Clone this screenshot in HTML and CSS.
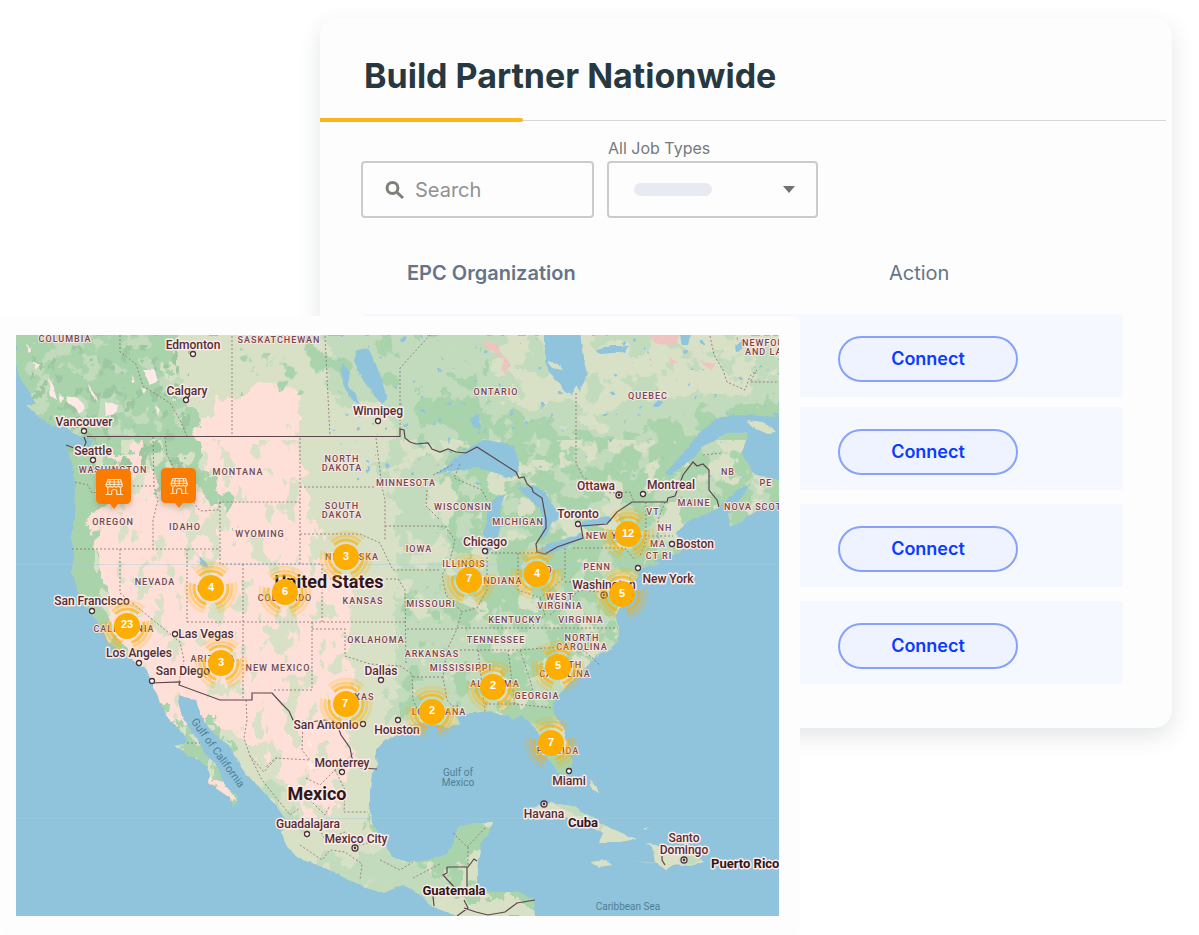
FILE: index.html
```html
<!DOCTYPE html>
<html lang="en">
<head>
<meta charset="utf-8">
<meta name="viewport" content="width=device-width, initial-scale=1">
<title>Build Partner Nationwide</title>
<link rel="stylesheet" href="styles.css">
</head>
<body>
<main class="stage">
  <section class="panel">
    <header class="panel-head">
      <h1 class="panel-title">Build Partner Nationwide</h1>
      <div class="panel-rule"></div>
    </header>
    <form class="filters">
      <div class="search">
        <label class="search-label" for="q" aria-label="Search">
          <svg class="search-icon" viewBox="0 0 20 20" aria-hidden="true"><circle cx="7.5" cy="8" r="5.4"/><path d="M11.600 12L18 18"/></svg>
        </label>
        <input class="search-input" id="q" type="search" placeholder="Search">
      </div>
      <div class="jobs">
        <label class="jobs-label" for="jobs">All Job Types</label>
        <div class="jobs-box">
          <select class="jobs-select" id="jobs"><option></option></select>
          <span class="jobs-pill"></span>
          <svg class="jobs-caret" viewBox="0 0 12 7" aria-hidden="true"><path d="M0 0H12L6 7Z"/></svg>
        </div>
      </div>
    </form>
    <table class="partners">
      <thead><tr class="row-head"><th class="th-org">EPC Organization</th><th class="th-act">Action</th></tr></thead>
      <tbody>
        <tr class="row"><td></td><td><button class="connect" type="button">Connect</button></td></tr>
        <tr class="row"><td></td><td><button class="connect" type="button">Connect</button></td></tr>
        <tr class="row"><td></td><td><button class="connect" type="button">Connect</button></td></tr>
        <tr class="row"><td></td><td><button class="connect" type="button">Connect</button></td></tr>
      </tbody>
    </table>
  </section>

  <section class="map-card">
    <svg class="map" viewBox="16 335 763 581" role="img" aria-label="Partner map of North America">
      <defs>
        <filter id="rough" x="-5%" y="-5%" width="110%" height="110%"><feTurbulence type="fractalNoise" baseFrequency=".1" numOctaves="2" seed="4"/><feDisplacementMap in="SourceGraphic" scale="4" xChannelSelector="R" yChannelSelector="G"/></filter>
        <filter id="ragged" x="-5%" y="-5%" width="110%" height="110%"><feTurbulence type="fractalNoise" baseFrequency=".05" numOctaves="4" seed="9"/><feDisplacementMap in="SourceGraphic" scale="34" xChannelSelector="R" yChannelSelector="G"/></filter>
        <filter id="m-beige" x="0" y="0" width="1" height="1" color-interpolation-filters="sRGB"><feTurbulence type="fractalNoise" baseFrequency=".035" numOctaves="4" seed="3"/><feColorMatrix values="0 0 0 0 .847  0 0 0 0 .878  0 0 0 0 .776  26 0 0 0 -15"/><feComposite in2="SourceGraphic" operator="in"/></filter>
        <filter id="m-sparse" x="0" y="0" width="1" height="1" color-interpolation-filters="sRGB"><feTurbulence type="fractalNoise" baseFrequency=".06 .04" numOctaves="4" seed="17"/><feColorMatrix values="0 0 0 0 .847  0 0 0 0 .878  0 0 0 0 .776  26 0 0 0 -15.4"/><feComposite in2="SourceGraphic" operator="in"/></filter>
        <filter id="m-light" x="0" y="0" width="1" height="1" color-interpolation-filters="sRGB"><feTurbulence type="fractalNoise" baseFrequency=".04" numOctaves="4" seed="12"/><feColorMatrix values="0 0 0 0 .761  0 0 0 0 .859  0 0 0 0 .741  26 0 0 0 -14.3"/><feComposite in2="SourceGraphic" operator="in"/></filter>
        <filter id="m-green" x="0" y="0" width="1" height="1" color-interpolation-filters="sRGB"><feTurbulence type="fractalNoise" baseFrequency=".04" numOctaves="4" seed="21"/><feColorMatrix values="0 0 0 0 .663  0 0 0 0 .827  0 0 0 0 .671  26 0 0 0 -15.4"/><feComposite in2="SourceGraphic" operator="in"/></filter>
        <filter id="m-dark" x="0" y="0" width="1" height="1" color-interpolation-filters="sRGB"><feTurbulence type="fractalNoise" baseFrequency=".1 .07" numOctaves="3" seed="5"/><feColorMatrix values="0 0 0 0 .61  0 0 0 0 .78  0 0 0 0 .63  20 0 0 0 -12"/><feComposite in2="SourceGraphic" operator="in"/></filter>
        <filter id="m-pink" x="0" y="0" width="1" height="1" color-interpolation-filters="sRGB"><feTurbulence type="fractalNoise" baseFrequency=".05" numOctaves="3" seed="33"/><feColorMatrix values="0 0 0 0 .996  0 0 0 0 .878  0 0 0 0 .847  26 0 0 0 -13.6"/><feComposite in2="SourceGraphic" operator="in"/></filter>
        <filter id="m-lake" x="0" y="0" width="1" height="1" color-interpolation-filters="sRGB"><feTurbulence type="fractalNoise" baseFrequency=".11" numOctaves="2" seed="8"/><feColorMatrix values="0 0 0 0 .565  0 0 0 0 .765  0 0 0 0 .863  30 0 0 0 -22"/><feComposite in2="SourceGraphic" operator="in"/></filter>
        <filter id="pin-shadow" x="-30%" y="-20%" width="160%" height="160%"><feDropShadow dx="0" dy="3" stdDeviation="3" flood-color="#7a6a50" flood-opacity=".35"/></filter>
        <clipPath id="land"><path d="M16 335H779V417L745 415 720 417 704 429 690 445 672 466 664 474 672 474 687 463 703 447 727 433 748 433 742 453 753 473 779 480V500L760 507 742 522 730 525 728 514 741 498 750 484 737 490 720 507 700 517 690 520 677 532 678 543 684 547 680 553 653 560 660 563 640 569 637 575 633 587 626 598 620 607 615 617 619 627 618 640 610 650 600 653 583 670 563 690 554 703 555 713 562 727 568 743 572 763 568 775 557 773 549 760 540 750 538 733 530 723 523 715 513 720 507 715 487 712 467 713 457 717 460 725 447 728 433 725 420 723 403 730 387 740 375 750 377 763 372 773 370 790 370 813 375 827 383 843 393 857 410 863 427 860 443 855 452 847 457 828 473 823 492 823 488 835 482 843 478 860 477 877 478 890 493 892 520 892 533 900 535 916H457L433 907 417 892 403 885 383 893 363 887 343 877 323 867 303 860 287 847 282 833 288 823 277 807 260 788 245 773 240 763 230 747 217 737 205 723 198 707 196 699 184 697 179 694 178 702 182 716 192 732 200 743 206 755 217 765 222 778 226 788 230 790 235 793 238 800 233 807 230 798 223 793 208 783 209 775 207 765 195 758 187 755 176 745 186 743 187 737 177 727 167 717 160 702 151 682 147 670 134 660 124 655 108 642 100 625 90 613 79 598 77 590 71 573 75 553 71 537 74 520 75 483 72 467 67 445 78 449 85 443 84 437 66 428 48 425 26 405 36 404 28 390 20 378 16 368Z"/></clipPath>
        <g id="cluster">
          <circle class="ring ring-1" r="17" pathLength="360"/>
          <circle class="ring ring-2" r="21" pathLength="360"/>
          <circle class="ring ring-3" r="25" pathLength="360"/>
          <circle class="core" r="13"/>
        </g>
        <g id="store">
          <path class="pin-body" filter="url(#pin-shadow)" d="M5 0H30Q35 0 35 5V30Q35 35 30 35H22L18 40 14 35H5Q0 35 0 30V5Q0 0 5 0Z"/>
          <g class="pin-icon"><path d="M12 10.500H24.500L26.200 15.500H10.200ZM14.300 10.500L13.500 15.500M18.200 10.500V15.500M22.100 10.500L23 15.500M11.300 13H25.100"/><path d="M10.200 15.500V17Q12.200 19.200 14.200 17Q16.200 19.200 18.200 17Q20.200 19.200 22.200 17Q24.200 19.200 26.200 17V15.500M11.800 18.500V25.500M24.600 18.500V25.500M9.800 25.500H15.500M20.900 25.500H26.600M15.600 25.500V22.500Q15.600 20.500 18.200 20.500Q20.800 20.500 20.800 22.500V25.500"/></g>
        </g>
        <g id="town"><circle class="town" r="2.500"/></g>
        <g id="capital"><circle class="town" r="3"/><circle class="dot" r="1.400"/></g>
      </defs>

      <rect class="water" x="16" y="335" width="763" height="581"/>
      <g filter="url(#rough)">
        <g clip-path="url(#land)">
          <rect class="green" x="10" y="330" width="775" height="591"/>
          <g filter="url(#ragged)">
            <path class="light" d="M300 330H520L470 372 420 400 415 440 440 480 450 560 480 600 500 650 460 740H370V560L300 440Z"/>
            <path class="light" d="M490 330H800V402L740 408 690 400 640 430 600 436 570 438 540 418 490 408Z"/>
            <path class="beige" d="M490 320H800V376L735 392 700 396 660 398 620 418 592 430 560 418 535 402 505 405Z"/>
            <path class="beige" d="M180 320H318L335 400 385 405 390 445 380 470 400 530 395 600 395 690 385 745 365 800 385 850 420 880 470 900 540 900V930H430L300 870 250 780 200 700 230 450 165 380Z"/>
            <path class="pink" d="M190 445L198 422 230 412 270 425 298 440 300 475 316 520 320 560 352 585 350 620 335 660 358 690 338 715 355 745 336 790 335 828 310 822 292 790 262 765 215 722 170 720 190 800 235 802 180 745 150 690 118 645 98 560 92 522 112 455 145 440 158 500Z"/>
            <path class="pink" d="M235 400L262 385 300 395 300 430 210 438Z"/>
            <path class="green" d="M150 430H190L205 465 232 505 232 520 216 505 180 475Z"/>
            <path class="beige" d="M204 500L220 510 218 548 212 570 198 570 206 540ZM276 610L292 625 284 650 272 645ZM225 730L250 740 285 790 270 800 235 760ZM98 585L112 610 125 640 115 635 98 610Z"/>
            <path class="light" d="M425 560H470L480 640 440 660ZM560 640L620 620 600 660 570 700 540 700ZM300 860L400 855 450 880 430 910ZM255 780L275 785 300 830 285 825Z"/>
          </g>
          <g>
            <rect class="fx" filter="url(#m-light)" x="16" y="335" width="170" height="100"/>
            <rect class="fx" filter="url(#m-light)" x="395" y="335" width="384" height="400"/>
            <rect class="fx" filter="url(#m-beige)" x="380" y="440" width="399" height="480"/>
            <rect class="fx" filter="url(#m-green)" x="240" y="335" width="180" height="60"/>
            <rect class="fx" filter="url(#m-sparse)" x="95" y="440" width="260" height="400"/>
            <rect class="fx" filter="url(#m-green)" x="400" y="560" width="220" height="160"/>
            <rect class="fx" filter="url(#m-dark)" x="30" y="345" width="160" height="125"/>
            <path class="fx" filter="url(#m-pink)" d="M215 395H298V445H215Z"/>
            <rect class="fx" filter="url(#m-lake)" x="330" y="335" width="449" height="150"/>
          </g>
          <path class="green" d="M73 470L88 480 86 540 92 590 110 620 104 632 90 612 76 592 70 560Z"/>
          <path class="snow" d="M48 378L53 385 57 400 51 396ZM58 393L64 400 60 403ZM66 395L78 398 85 408 80 413 68 402ZM143 370L155 370 158 382 150 385ZM131 375L135 382 132 383ZM26 345L32 350 28 352ZM33 362L39 364 36 370ZM156 405L160 410 157 415ZM88 384L96 395 98 402 90 392ZM105 402L118 405 116 414 106 416ZM140 388L146 389 144 394ZM308 738L314 748 308 745ZM308 760L318 768 310 770Z"/>
          <path class="rose" d="M650 336L680 336 673 345 655 343ZM670 358L678 362 668 366ZM700 360L715 364 712 370ZM483 342L498 345 500 352 510 362 505 376 501 370 503 358 490 350Z"/>
        </g>
        <path class="water" d="M545 330H580L583 358 587 373 580 391 576 386 571 394 565 391 556 380 549 373 545 360ZM357 350L368 348 376 364 383 384 387 400 382 405 372 392 360 374 354 360ZM343 364L350 372 348 386 355 396 360 404 352 402 344 384 340 372ZM434 476L453 460 478 442 492 440 507 443 517 455 519 474 507 477 492 472 478 468 460 470 444 472ZM496 497L506 494 500 510 501 525 496 545 488 553 482 542 486 524 488 506ZM518 488L535 486 546 493 552 505 562 516 552 522 547 535 541 540 543 524 540 508 528 498ZM536 552L547 544 562 541 580 533 584 537 562 549 543 556ZM578 525L592 519 609 516 612 521 598 526 582 527ZM199 556L207 562 208 568 202 566ZM80 437L92 440 89 450 85 444ZM470 418L479 415 480 430 473 426ZM596 350L612 346 628 346 625 352 600 354ZM735 345L743 340 742 350 736 351ZM680 336L690 336 688 344 682 344Z"/>
        <path class="beige" d="M548 361L558 363 563 370 552 368ZM747 420L762 422 777 433 768 434 752 427Z"/>
        <path class="beige" d="M522 816L532 808 550 803 572 806 590 816 604 825 622 833 637 839 620 842 599 842 603 833 588 824 566 816 548 813 530 812ZM590 862L606 860 612 866 600 868ZM633 861L655 863 652 847 645 844 668 846 690 852 704 862 690 866 674 864 666 870 658 864ZM590 779L597 787 599 795 592 790ZM585 760L596 760ZM643 829L650 827 646 831Z"/>
        <path class="light" d="M550 803L572 806 604 825 600 832 580 816ZM690 852L702 860 690 865 678 860ZM750 478L762 482 774 486 768 489 753 484Z"/>
      </g>
      <path class="seam" d="M16 564.500H779M16 818.500H779"/>

      <path class="state" d="M120 335V352L136 364 143 386 170 403 180 420 187 436M232 336V436M325 336L330 436M400 429V368L430 335M576 393V463L583 477 610 493 630 492 634 502M710 336L714 355 723 370 727 382 745 390 750 376 757 370 750 382H779M703 455L722 453M75 482L88 485 92 493 127 486H154M153 437L154 487 158 500 153 520V549M165 437L167 455 180 480 192 500 200 511 218 510 220 502H300M72 549H220M220 502V564H322V622M120 549V593L180 642 184 660 179 682M187 549V622M187 622H406M243 564V700M300 438V564M300 487H376M376 438L382 487 385 500V540M300 534H360L380 543 388 560 393 570H440M322 579H398L405 590 406 665M385 526H445L455 540 450 560 442 575 446 595 462 612 457 628M312 622V690H272M312 629H345V656L370 664 400 666 412 674 413 700 420 715M407 629H457L447 650 443 677 447 700 452 706H460M413 677H443M457 628H618M460 650H520L545 648 580 647 600 665M478 650L485 712M508 650L515 705M485 704H515L553 708M520 650L530 680 535 700M433 475L454 464M460 464L454 478 482 490 487 500M487 553H537M487 553V590L477 608 462 612M518 553V590L540 598 550 590 565 577V548M573 548H625L635 560M565 582H622L628 592M540 598L545 615 530 628M550 615L580 590 600 592M646 502V540L640 556M665 502L658 520V545M640 536H673M427 490L426 506 440 520M187 743H200M246 700L247 720 244 738 250 756 264 772 270 765 278 757M250 756L262 780 278 800 290 815 300 808M303 720L302 750 310 760 275 758 265 768M306 778L320 785 335 770 355 752M335 770L345 790 344 812 368 812M300 845L322 860 330 850 345 852 362 864 360 880M316 822L325 840 345 832 360 845 372 842M380 860L400 870 413 862M310 800L325 815 330 805M453 833L467 847 485 828M468 847V867M413 878L440 864"/>
      <path class="nation" d="M66 445L74 448M84 437L86 442 83 450M87 436.500H400V429L404 430 405 438 410 442 416 444 428 443 432 449 440 452 448 449 456 452 466 453 477 447 516 472 519 478 524 477 527 484 532 488 533 492 542 498 546 520 546 528 536 544 537 552 545 554 557 547 583 538 581 526 607 524 617 512 632 502H667L668 498 675 496 683 475 693 462 697 466 703 464 709 470V490L717 500 719 507M151 683L180 682 179 685 220 700H252V693H272L282 704 289 711 293 720 303 723 325 720 338 727 341 735 350 748 352 758 360 768 377 769M447 867H468L474 859 477 861M447 867V873L443 875 455 888M467 867V888M464 900L468 908 457 916M433 896L434 906M464 908L476 912 488 915 505 912 517 903 535 900M662 856V860L665 865"/>

      <g class="city">
        <text x="193" y="349">Edmonton</text><text x="187" y="395">Calgary</text><text x="378" y="415">Winnipeg</text><text x="84" y="426">Vancouver</text><text x="93" y="455">Seattle</text><text x="596" y="490">Ottawa</text><text x="671" y="489">Montreal</text><text x="578" y="518">Toronto</text><text x="695" y="548">Boston</text><text x="668" y="583">New York</text><text x="604" y="589">Washington</text><text x="485" y="546">Chicago</text><text x="92" y="605">San Francisco</text><text x="206" y="638">Las Vegas</text><text x="139" y="657">Los Angeles</text><text x="183" y="675">San Diego</text><text x="381" y="675">Dallas</text><text x="326" y="729">San Antonio</text><text x="397" y="734">Houston</text><text x="342" y="767">Monterrey</text><text x="308" y="828">Guadalajara</text><text x="356" y="843">Mexico City</text><text x="569" y="785">Miami</text><text x="544" y="818">Havana</text><text x="684" y="842">Santo</text><text x="684" y="854">Domingo</text>
      </g>
      <g class="region">
        <text x="65" y="342">COLUMBIA</text><text x="279" y="343">SASKATCHEWAN</text><text x="742" y="346" class="from">NEWFOUNDLAND</text><text x="745" y="355" class="from">AND LABRADOR</text><text x="496" y="395">ONTARIO</text><text x="648" y="399">QUEBEC</text><text x="238" y="475">MONTANA</text><text x="342" y="462">NORTH</text><text x="342" y="471">DAKOTA</text><text x="406" y="486">MINNESOTA</text><text x="463" y="510">WISCONSIN</text><text x="342" y="509">SOUTH</text><text x="342" y="518">DAKOTA</text><text x="113" y="473">WASHINGTON</text><text x="113" y="525">OREGON</text><text x="185" y="530">IDAHO</text><text x="260" y="537">WYOMING</text><text x="518" y="525">MICHIGAN</text><text x="728" y="475">NB</text><text x="766" y="486">PE</text><text x="694" y="506">MAINE</text><text x="724" y="510" class="from">NOVA SCOTIA</text><text x="653" y="515">VT</text><text x="665" y="531">NH</text><text x="612" y="539">NEW YORK</text><text x="658" y="547">MA</text><text x="659" y="559">CT RI</text><text x="155" y="585">NEVADA</text><text x="211" y="592">UTAH</text><text x="285" y="601">COLORADO</text><text x="352" y="560">NEBRASKA</text><text x="419" y="552">IOWA</text><text x="464" y="567">ILLINOIS</text><text x="501" y="584">INDIANA</text><text x="540" y="573">OHIO</text><text x="597" y="570">PENN</text><text x="560" y="600">WEST</text><text x="560" y="609">VIRGINIA</text><text x="581" y="623">VIRGINIA</text><text x="515" y="623">KENTUCKY</text><text x="363" y="604">KANSAS</text><text x="431" y="607">MISSOURI</text><text x="376" y="643">OKLAHOMA</text><text x="496" y="643">TENNESSEE</text><text x="432" y="657">ARKANSAS</text><text x="461" y="671">MISSISSIPPI</text><text x="124" y="632">CALIFORNIA</text><text x="213" y="662">ARIZONA</text><text x="278" y="671">NEW MEXICO</text><text x="358" y="700">TEXAS</text><text x="439" y="715">LOUISIANA</text><text x="495" y="687">ALABAMA</text><text x="537" y="699">GEORGIA</text><text x="582" y="641">NORTH</text><text x="582" y="650">CAROLINA</text><text x="565" y="668">SOUTH</text><text x="565" y="677">CAROLINA</text><text x="558" y="754">FLORIDA</text>
      </g>
      <g class="country"><text class="big" x="329" y="588">United States</text><text class="big" x="317" y="800">Mexico</text><text x="454" y="895">Guatemala</text><text x="583" y="827">Cuba</text><text x="711" y="868" class="from">Puerto Rico</text></g>
      <g class="sea"><text x="458" y="776">Gulf of</text><text x="458" y="786">Mexico</text><text x="628" y="910">Caribbean Sea</text><text class="gulf" transform="translate(215 755) rotate(54)">Gulf of California</text></g>

      <g>
        <use href="#town" x="193" y="354"/><use href="#town" x="186" y="400"/><use href="#town" x="378" y="421"/><use href="#town" x="84" y="431"/><use href="#town" x="93" y="460"/><use href="#capital" x="619" y="495"/><use href="#town" x="643" y="494"/><use href="#town" x="578" y="524"/><use href="#town" x="672" y="544"/><use href="#town" x="638" y="568"/><use href="#capital" x="604" y="595"/><use href="#town" x="485" y="551"/><use href="#town" x="92" y="611"/><use href="#town" x="175" y="634"/><use href="#town" x="139" y="663"/><use href="#town" x="152" y="681"/><use href="#town" x="381" y="680"/><use href="#town" x="363" y="724"/><use href="#town" x="398" y="720"/><use href="#town" x="342" y="772"/><use href="#town" x="307" y="834"/><use href="#capital" x="355" y="848"/><use href="#town" x="569" y="771"/><use href="#capital" x="544" y="804"/><use href="#capital" x="684" y="860"/>
      </g>
      <use href="#store" x="96" y="469"/><use href="#store" x="161" y="468"/>
      <g class="count">
        <use href="#cluster" x="346" y="557"/><text x="346" y="560">3</text>
        <use href="#cluster" x="285" y="592"/><text x="285" y="595">6</text>
        <use href="#cluster" x="211" y="588"/><text x="211" y="591">4</text>
        <use href="#cluster" x="127" y="626"/><text x="127" y="628">23</text>
        <use href="#cluster" x="221" y="663"/><text x="221" y="666">3</text>
        <use href="#cluster" x="469" y="580"/><text x="469" y="582">7</text>
        <use href="#cluster" x="537" y="574"/><text x="537" y="577">4</text>
        <use href="#cluster" x="628" y="534"/><text x="628" y="537">12</text>
        <use href="#cluster" x="622" y="594"/><text x="622" y="597">5</text>
        <use href="#cluster" x="558" y="667"/><text x="558" y="669">5</text>
        <use href="#cluster" x="493" y="687"/><text x="493" y="689">2</text>
        <use href="#cluster" x="432" y="712"/><text x="432" y="714">2</text>
        <use href="#cluster" x="346" y="704"/><text x="345" y="707">7</text>
        <use href="#cluster" x="551" y="743"/><text x="551" y="746">7</text>
      </g>
    </svg>
  </section>
</main>
</body>
</html>
```
FILE: styles.css
```css
* { box-sizing: border-box; }
body { margin: 0; background: #fff; font-family: Inter, "Liberation Sans", sans-serif; }

.stage {
  display: grid;
  grid-template-columns: 320fr 480fr 372fr 27fr;
  align-items: start;
  padding-top: 18px;
}

.panel {
  grid-column: 2 / 4;
  grid-row: 1;
  padding-bottom: 44px;
  background: #fdfdfe;
  border-radius: 18px;
  box-shadow: 0 8px 22px rgba(40, 55, 60, .13);
}
.panel-title {
  margin: 0;
  padding: 36px 44px 20px;
  font-size: 34px;
  line-height: 44px;
  font-weight: 700;
  color: #283840;
}
.panel-rule {
  height: 4px;
  margin-right: 6px;
  background: linear-gradient(#d6d7d8, #d6d7d8) 0 2px / 100% 1px no-repeat;
}
.panel-rule::before {
  content: "";
  display: block;
  width: 24%;
  height: 4px;
  border-radius: 0 2px 2px 0;
  background: #fdb41a;
}

.filters {
  display: flex;
  align-items: flex-end;
  gap: 13px;
  padding: 16px 41px 0;
}
.search {
  display: flex;
  align-items: center;
  gap: 10px;
  width: 233px;
  height: 57px;
  padding: 0 22px;
  border: 2px solid #cbcbcb;
  border-radius: 4px;
}
.search-label { display: flex; }
.search-icon { width: 20px; height: 20px; fill: none; stroke: #7e7f79; stroke-width: 3; }
.search-input {
  flex: 1;
  min-width: 0;
  padding: 0;
  border: 0;
  outline: 0;
  background: none;
  font: 400 20px/24px Inter, sans-serif;
}
.search-input::placeholder { color: #8f9193; opacity: 1; }
.jobs { display: flex; flex-direction: column; width: 211px; }
.jobs-label { padding: 0 1px; margin-bottom: 3px; font-size: 16px; line-height: 20px; color: #77797b; }
.jobs-box {
  display: grid;
  grid-template-columns: 27px 78px 1fr 12px 23px;
  align-items: center;
}
.jobs-select {
  grid-area: 1 / 1 / 2 / 6;
  width: 100%;
  height: 57px;
  border: 2px solid #cbcbcb;
  border-radius: 4px;
  background: none;
  appearance: none;
}
.jobs-pill { grid-area: 1 / 2; height: 13px; border-radius: 7px; background: #e7ebf1; pointer-events: none; }
.jobs-caret { grid-area: 1 / 4; width: 12px; height: 7px; fill: #6f7173; pointer-events: none; }

.partners { display: block; padding: 0 49px 0 42px; }
.partners thead, .partners tbody { display: block; }
.row-head, .row {
  display: grid;
  grid-template-columns: minmax(0, 388fr) minmax(0, 373fr);
}
.row-head { align-items: center; height: 96px; padding-top: 14px; color: #677487; font-size: 20px; line-height: 24px; }
.row-head th { padding: 0; text-align: left; }
.row-head .th-org { padding-left: 45px; font-weight: 600; }
.row-head .th-act { padding-left: 139px; font-weight: 400; }
.row { height: 83px; margin-bottom: 14px; border-radius: 4px; background: #f6f8ff; }
.row:first-child { margin-bottom: 10px; }
.row:last-child { margin-bottom: 0; }
.row td { padding: 22px 0 0 88px; }
.connect {
  display: block;
  width: 180px;
  height: 46px;
  border: 2px solid #86a2fb;
  border-radius: 23px;
  background: #eff2ff;
  color: #0a3cff;
  font: 600 18px/20px Inter, sans-serif;
}

.map-card {
  grid-column: 1 / 3;
  grid-row: 1;
  z-index: 1;
  margin-top: 298px;
  padding: 19px 21px 19px 16px;
  border-radius: 6px;
  background: #fdfdfd;
}
.map { display: block; width: 100%; height: auto; }

.water { fill: #90c3dc; }
.green { fill: #a9d3ab; }
.light { fill: #c2dbbd; }
.beige { fill: #d8e0c6; }
.pink { fill: #fee0d8; }
.snow { fill: #ffe9e6; }
.rose { fill: #eec3c0; }
.seam { fill: none; stroke: #a6cbdd; stroke-opacity: .4; }
.state { fill: none; stroke: #8a6f70; stroke-width: 1; stroke-dasharray: 2 2; stroke-opacity: .8; }
.nation { fill: none; stroke: #5c454b; stroke-width: 1.2; }

.map text { font-family: Roboto, "Liberation Sans", sans-serif; text-anchor: middle; paint-order: stroke; stroke-linejoin: round; }
.map .from { text-anchor: start; }
.city text { font-size: 12px; font-weight: 500; fill: #4e3036; stroke: #ffe9e6; stroke-width: 3px; }
.region text { font-size: 9px; font-weight: 500; letter-spacing: 1px; fill: #704950; stroke: #fbe7e3; stroke-width: 2px; }
.country text { font-size: 13px; font-weight: 700; fill: #2c171c; stroke: #ffe9e6; stroke-width: 3px; }
.country .big { font-size: 18px; }
.sea text { font-size: 10px; fill: #4f7f97; }
.sea .gulf { font-size: 11px; }

.town { fill: #fff; stroke: #4e3036; stroke-width: 1.3; }
.dot { fill: #4e3036; }
.core { fill: #feae02; }
.ring { fill: none; stroke: #feae02; stroke-width: 3; stroke-dasharray: 88 32; stroke-dashoffset: 14; }
.ring-1 { stroke-opacity: .65; }
.ring-2 { stroke-opacity: .4; }
.ring-3 { stroke-opacity: .2; }
.count text { font-family: "Liberation Sans", sans-serif; font-size: 11px; font-weight: 700; fill: #fff; }
.pin-body { fill: #f97c04; }
.pin-icon { fill: none; stroke: #ffe3c4; stroke-width: 1.2; stroke-linejoin: round; stroke-linecap: round; }
```
